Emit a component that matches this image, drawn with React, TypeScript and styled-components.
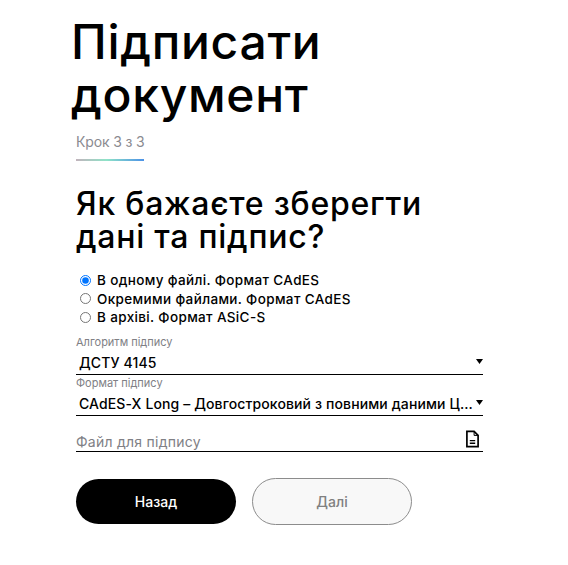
import React from 'react';
import styled, { createGlobalStyle } from 'styled-components';

const GlobalStyle = createGlobalStyle`
  html, body {
    margin: 0;
    padding: 0;
    background: #fff;
    font-family: "Inter", "Liberation Sans", sans-serif;
    color: #000;
  }
`;

const Page = styled.div`
  width: 568px;
  height: 565px;
  overflow: hidden;
  box-sizing: border-box;
  padding: 15px 85px 0 76px;
`;

const Title = styled.h1`
  margin: 0 0 0 -5px;
  font-size: 48px;
  line-height: 53px;
  font-weight: 500;
  letter-spacing: 0.7px;
`;

const StepWrap = styled.div`
  width: 68px;
  margin-top: 11px;
  padding-bottom: 7px;
  font-size: 14px;
  line-height: 20px;
  white-space: nowrap;
  color: #8a8a90;
  letter-spacing: -0.15px;
  border-bottom: 2px solid transparent;
  border-image: linear-gradient(90deg, #c4b2bc 0%, #8fe3c8 45%, #4a90e8 100%) 1;
`;

const Question = styled.h2`
  margin: 26px 0 0;
  font-size: 32px;
  line-height: 33px;
  font-weight: 500;
  letter-spacing: 0.75px;
`;

const RadioGroup = styled.div`
  display: flex;
  flex-direction: column;
  margin-top: 18px;
`;

const RadioRow = styled.label`
  display: flex;
  align-items: center;
  height: 18.5px;
  font-size: 13.5px;
  font-weight: 500;
  letter-spacing: 0.36px;
  cursor: pointer;
`;

const RadioInput = styled.input`
  width: 11px;
  height: 11px;
  margin: 0 6px 0 4px;
`;

const Field = styled.div<{ $gap?: number }>`
  margin-top: ${p => p.$gap ?? 0}px;
`;

const FieldLabel = styled.div`
  font-size: 11px;
  line-height: 13px;
  color: #808085;
`;

const SelectBox = styled.div`
  display: flex;
  align-items: center;
  box-sizing: border-box;
  height: 26px;
  padding: 2px 0 0 3px;
  border-bottom: 1px solid #000;
  font-size: 14px;
  font-weight: 500;
  letter-spacing: 0.12px;
`;

const SelectText = styled.span`
  flex: 1;
  min-width: 0;
  white-space: nowrap;
  overflow: hidden;
  text-overflow: ellipsis;
`;

const Caret = styled.svg`
  flex: none;
  width: 7px;
  height: 5px;
  margin-bottom: 2px;
`;

const FileRow = styled.div`
  display: flex;
  align-items: center;
  justify-content: space-between;
  box-sizing: border-box;
  height: 28px;
  margin-top: 8px;
  padding-top: 8px;
  border-bottom: 1px solid #000;
  font-size: 14px;
  letter-spacing: 0.25px;
  color: #808085;
`;

const FileIcon = styled.svg`
  margin-bottom: 5px;
`;

const Actions = styled.div`
  display: flex;
  gap: 16px;
  margin-top: 26px;
`;

const Button = styled.button<{ $primary?: boolean }>`
  width: 160px;
  height: ${p => (p.$primary ? 45 : 47)}px;
  margin-top: ${p => (p.$primary ? 1 : 0)}px;
  box-sizing: border-box;
  border-radius: 24px;
  border: ${p => (p.$primary ? 'none' : '1px solid #8c8c8c')};
  background: ${p => (p.$primary ? '#000' : '#f8f8f8')};
  color: ${p => (p.$primary ? '#fff' : '#808080')};
  font-family: inherit;
  font-size: 14px;
  font-weight: 500;
  cursor: pointer;
`;

const options = [
  'В одному файлі. Формат CAdES',
  'Окремими файлами. Формат CAdES',
  'В архіві. Формат ASiC-S',
];

const selects = [
  { label: 'Алгоритм підпису', value: 'ДСТУ 4145', gap: 9.5 },
  { label: 'Формат підпису', value: 'CAdES-X Long – Довгостроковий з повними даними Центру', gap: 1.5 },
];

const App: React.FC = () => (
  <Page>
    <GlobalStyle />
    <Title>
      Підписати
      <br />
      документ
    </Title>
    <StepWrap>Крок 3 з 3</StepWrap>
    <Question>
      Як бажаєте зберегти
      <br />
      дані та підпис?
    </Question>
    <RadioGroup>
      {options.map((text, i) => (
        <RadioRow key={text}>
          <RadioInput type="radio" name="format" defaultChecked={i === 0} />
          {text}
        </RadioRow>
      ))}
    </RadioGroup>
    {selects.map(s => (
      <Field key={s.label} $gap={s.gap}>
        <FieldLabel>{s.label}</FieldLabel>
        <SelectBox>
          <SelectText>{s.value}</SelectText>
          <Caret viewBox="0 0 7 5">
            <path d="M0 0h7L3.5 5z" fill="#000" />
          </Caret>
        </SelectBox>
      </Field>
    ))}
    <FileRow>
      Файл для підпису
      <FileIcon width="18" height="18" viewBox="0 0 18 18" fill="none" stroke="#000" strokeWidth="1.7">
        <path d="M1.9 1.4h7.2l4 4v11.2H1.9z" />
        <path d="M9.1 1.4v4h4" strokeWidth="1" />
        <path d="M4.8 10.6h5.4M4.8 13.2h5.4" strokeWidth="1.4" />
      </FileIcon>
    </FileRow>
    <Actions>
      <Button $primary>Назад</Button>
      <Button>Далі</Button>
    </Actions>
  </Page>
);

export default App;
